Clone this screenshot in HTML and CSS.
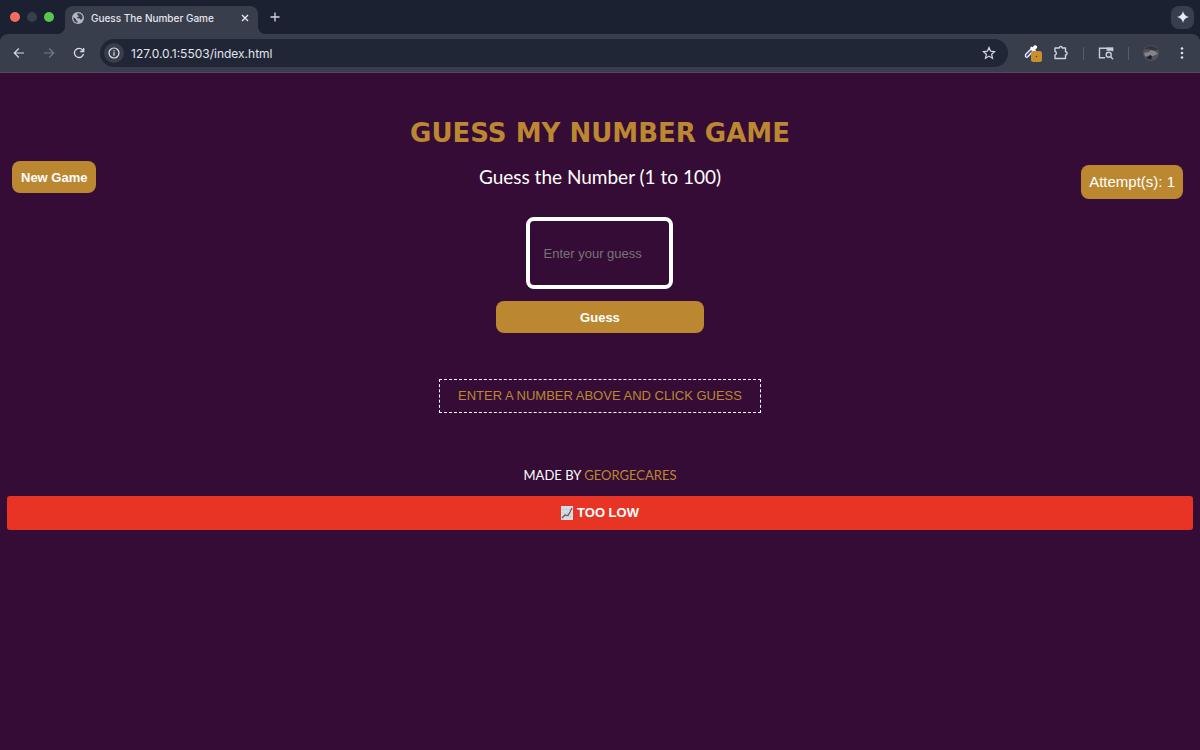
FILE: index.html
```html
<!DOCTYPE html>
<html lang="en">
<head>
<meta charset="utf-8">
<title>Guess The Number Game</title>
<link rel="stylesheet" href="styles.css">
</head>
<body>
<header class="browser">
  <div class="tabs">
    <div class="lights"><span class="light red"></span><span class="light grey"></span><span class="light green"></span></div>
    <div class="tab">
      <svg class="globe" width="12" height="12" viewBox="0 0 12 12"><circle cx="6" cy="6" r="6" fill="#b3b8c2"/><path d="M1.2 5.2 4 7v1.3l1.5 1v1.5C3 10.700 1.200 8.500 1.200 5.200ZM5.600 1.200 5 2.800l1.600 1v1L4.800 5.300l.6 1h2l1.400 1.500 1-.2C11.500 5 10.500 1.500 5.600 1.200Z" fill="#3b404e"/></svg>
      <span class="tab-title">Guess The Number Game</span>
      <button class="icon" aria-label="Close tab"><svg width="8" height="8" viewBox="0 0 8 8"><path d="m1 1 6 6M7 1 1 7" stroke="#e4e7ed" stroke-width="1.400"/></svg></button>
    </div>
    <button class="icon" aria-label="New tab"><svg width="10" height="10" viewBox="0 0 10 10"><path d="M5 .5v9M.5 5h9" stroke="#d4d8e0" stroke-width="1.300"/></svg></button>
    <button class="icon sparkle" aria-label="Assistant"><svg width="12" height="12" viewBox="0 0 12 12"><path d="M6 0Q6.800 5.200 12 6 6.800 6.800 6 12 5.200 6.800 0 6 5.200 5.200 6 0Z" fill="#e6eafa"/></svg></button>
  </div>
  <div class="toolbar">
    <nav class="navigation" aria-label="Browser">
      <button class="icon" aria-label="Back"><svg width="12" height="12" viewBox="0 0 12 12" fill="none" stroke="#d5dae5" stroke-width="1.200"><path d="M11 6H1.500M5.800 1.500 1.300 6l4.500 4.500"/></svg></button>
      <button class="icon" aria-label="Forward"><svg width="12" height="12" viewBox="0 0 12 12" fill="none" stroke="#747a88" stroke-width="1.200"><path d="M1 6h9.500M6.200 1.500 10.700 6l-4.500 4.500"/></svg></button>
      <button class="icon" aria-label="Reload"><svg width="12" height="12" viewBox="0 0 12 12" fill="none" stroke="#d5dae5" stroke-width="1.300"><path d="M10.500 7A4.600 4.600 0 1 1 9.600 3L10.700 4.200M10.700 1v3.500H7.200"/></svg></button>
    </nav>
    <div class="address">
      <button class="icon info" aria-label="Site information"><svg width="12" height="12" viewBox="0 0 12 12" fill="none" stroke="#dfe3eb" stroke-width="1.200"><circle cx="6" cy="6" r="5"/><path d="M6 5.300v3.400M6 3.200v1.300"/></svg></button>
      <input class="url" aria-label="Address" value="127.0.0.1:5503/index.html">
      <button class="icon" aria-label="Bookmark"><svg width="14" height="14" viewBox="0 0 14 14"><path d="m7 1.500 1.600 3.700 4 .4-3 2.600.9 4L7 10.100l-3.500 2.100.9-4-3-2.600 4-.4Z" fill="none" stroke="#d5dae5" stroke-width="1.200"/></svg></button>
    </div>
    <div class="tools">
      <div class="extensions">
        <button class="icon" aria-label="Color picker"><svg width="20" height="20" viewBox="0 0 20 20"><path d="M2.500 13.500v-2L8 6l2 2-5.200 5.700Q3.500 15 2.500 13.500Z" fill="#4b45a0" stroke="#f2f1ff" stroke-width="1.300"/><path d="M7 5 8.500 3.500l1.300.7L11 2.600Q12.500 1.500 13.800 3q1 1.300-.2 2.500L12.300 6.500l.7 1.300L11.500 9.200Z" fill="#fff"/><rect x="8" y="8" width="11" height="11" rx="2.500" fill="#c98f2e"/><circle cx="13.400" cy="13.500" r=".7" fill="#54401b"/></svg></button>
        <button class="icon" aria-label="Extensions"><svg width="16" height="16" viewBox="0 0 16 16"><path d="M2 3h4.200a1.500 1.500 0 0 1 3 0h3.300v3.700a1.600 1.600 0 0 1 0 3.200v3.600H2V10a1.800 1.800 0 0 0 0-3.500Z" fill="none" stroke="#ccd2e3" stroke-width="1.400" stroke-linejoin="round"/></svg></button>
      </div>
      <span class="divider"></span>
      <button class="icon" aria-label="Search tabs"><svg width="16" height="14" viewBox="0 0 16 14"><path d="M7 11.800H1.500v-9.500H14.500v3" fill="none" stroke="#c5cbdc" stroke-width="1.400"/><path d="M8.500 1.600h6.700v3.200H8.500Z" fill="#c5cbdc"/><circle cx="10.700" cy="8.700" r="2.500" fill="none" stroke="#c5cbdc" stroke-width="1.400"/><path d="m12.500 10.500 2.500 2.700" stroke="#c5cbdc" stroke-width="1.400"/></svg></button>
      <span class="divider"></span>
      <button class="icon profile" aria-label="Profile"><svg width="16" height="16" viewBox="0 0 16 16"><circle cx="8" cy="8" r="8" fill="#53525a"/><path d="M1 4.500Q8-3 15 4.500L12 6 5 4Z" fill="#34353c"/><path d="m1 8 5-1 2-2 4 1 3 3-5 2-4 1-4-1Z" fill="#85838a"/><path d="m3 13 4-3 2 1-1 4Z" fill="#202127"/></svg></button>
      <button class="icon" aria-label="Menu"><svg width="4" height="14" viewBox="0 0 4 14" fill="#dce0e9"><circle cx="2" cy="2.500" r="1.300"/><circle cx="2" cy="7" r="1.300"/><circle cx="2" cy="11.500" r="1.300"/></svg></button>
    </div>
  </div>
</header>
<main class="game">
  <h1 class="title">GUESS MY NUMBER GAME</h1>
  <div class="board">
    <button class="action new-game">New Game</button>
    <form class="guess-form" onsubmit="return false">
      <label class="prompt" for="guess">Guess the Number (1 to 100)</label>
      <input class="guess" id="guess" type="text" inputmode="numeric" placeholder="Enter your guess">
      <button class="action submit">Guess</button>
    </form>
    <div class="attempts">Attempt(s): 1</div>
  </div>
  <p class="hint">ENTER A NUMBER ABOVE AND CLICK GUESS</p>
  <p class="credit">MADE BY <a class="author" href="#">GEORGECARES</a></p>
  <div class="result" role="status">
    <svg width="12" height="14" viewBox="0 0 12 14"><path d="M0 0h12v14H0Z" fill="#dce1e6"/><path d="M3 0v14M6 0v14M9 0v14M0 3.500h12M0 7h12M0 10.500h12" stroke="#b7c5d0" stroke-width=".5"/><path d="m1 12 3-3 3 .5L9 6l2-4" fill="none" stroke="#744b67" stroke-width="1.200"/></svg>
    <span>TOO LOW</span>
  </div>
</main>
</body>
</html>
```
FILE: styles.css
```css
* { box-sizing: border-box; }
body {
  margin: 0;
  min-height: 100vh;
  background: #350c36;
  color: #fff;
  font-family: "Liberation Sans", Arial, sans-serif;
}
button, input { font: inherit; color: inherit; }
svg { display: block; }
.icon {
  display: grid;
  place-items: center;
  padding: 0;
  border: 0;
  background: none;
}

.browser { background: #1b2130; font-family: Inter, sans-serif; }
.tabs { display: flex; align-items: center; height: 34px; padding-right: 6px; }
.lights { display: flex; gap: 7px; padding: 0 11px 0 10px; }
.light { width: 10px; height: 10px; border-radius: 50%; }
.red { background: #f26d5f; }
.grey { background: #393e4b; }
.green { background: #57c84d; }
.tab {
  display: flex;
  align-items: center;
  gap: 7px;
  width: 193px;
  height: 28px;
  margin: 6px 12px 0 0;
  padding: 0 9px 4px 7px;
  border-radius: 8px 8px 0 0;
  background: #383e4c;
  position: relative;
}
.tab::before, .tab::after {
  content: "";
  position: absolute;
  bottom: 0;
  width: 8px;
  height: 8px;
}
.tab::before { left: -8px; background: radial-gradient(circle at 0 0, #1b2130 8px, #383e4c 8px); }
.tab::after { right: -8px; background: radial-gradient(circle at 100% 0, #1b2130 8px, #383e4c 8px); }
.tab-title { flex: 1; color: #e3e6ed; font-size: 10px; font-weight: 500; white-space: nowrap; }
.sparkle { width: 23px; height: 23px; margin-left: auto; border-radius: 8px; background: #383e4c; }
.toolbar {
  display: flex;
  align-items: center;
  gap: 15px;
  height: 39px;
  padding: 0 16px 0 13px;
  border-bottom: 1px solid #4b4e5c;
  border-radius: 8px 8px 0 0;
  background: #383e4c;
}
.navigation { display: flex; gap: 18px; }
.address {
  display: flex;
  flex: 1;
  align-items: center;
  gap: 7px;
  height: 28px;
  padding: 0 12px 0 4px;
  border-radius: 14px;
  background: #202636;
}
.info { width: 20px; height: 20px; border-radius: 50%; background: #383e4c; }
.url { flex: 1; min-width: 0; padding: 0; border: 0; background: none; color: #e0e4ed; font-size: 12px; }
.tools { display: flex; align-items: center; gap: 14px; }
.extensions { display: flex; align-items: center; gap: 10px; }
.profile { margin-right: 7px; }
.divider { width: 1px; height: 13px; background: #565c6b; }

.game { padding: 44px 7px 24px; }
.title {
  margin: 0;
  color: #bb8831;
  font: bold 26px/32px Verdana, "DejaVu Sans", sans-serif;
  text-align: center;
}
.board {
  display: grid;
  grid-template-columns: 1fr auto 1fr;
  align-items: start;
  padding: 12px 5px 0;
}
.action {
  height: 32px;
  padding: 0 9px;
  border: 0;
  border-radius: 8px;
  background: #bb8831;
  font-size: 13px;
  font-weight: bold;
}
.new-game { justify-self: start; }
.guess-form { display: flex; flex-direction: column; align-items: center; }
.prompt { font: 19px/32px Papyrus, Lato, sans-serif; }
.guess {
  width: 147px;
  height: 72px;
  margin: 24px 0 12px;
  padding: 0 13px;
  border: 4px solid #fff;
  border-radius: 8px;
  background: transparent;
  font-size: 13px;
}
.guess::placeholder { color: #757575; }
.submit { width: 208px; }
.attempts {
  justify-self: end;
  margin: 4px 5px 0 0;
  padding: 0 8px;
  border-radius: 8px;
  background: #bb8831;
  font-size: 15px;
  line-height: 34px;
}
.hint {
  width: fit-content;
  margin: 46px auto 0;
  padding: 0 18px;
  border: 1px dashed #fff;
  color: #bb8831;
  font-size: 13px;
  line-height: 32px;
}
.credit { margin: 52px 0 11px; font: 13px/20px "Gill Sans", Lato, sans-serif; text-align: center; }
.author { color: #bb8831; text-decoration: none; }
.result {
  display: flex;
  align-items: center;
  justify-content: center;
  gap: 4px;
  border-radius: 3px;
  background: #e83424;
  font-size: 13px;
  font-weight: bold;
  line-height: 34px;
}
```
